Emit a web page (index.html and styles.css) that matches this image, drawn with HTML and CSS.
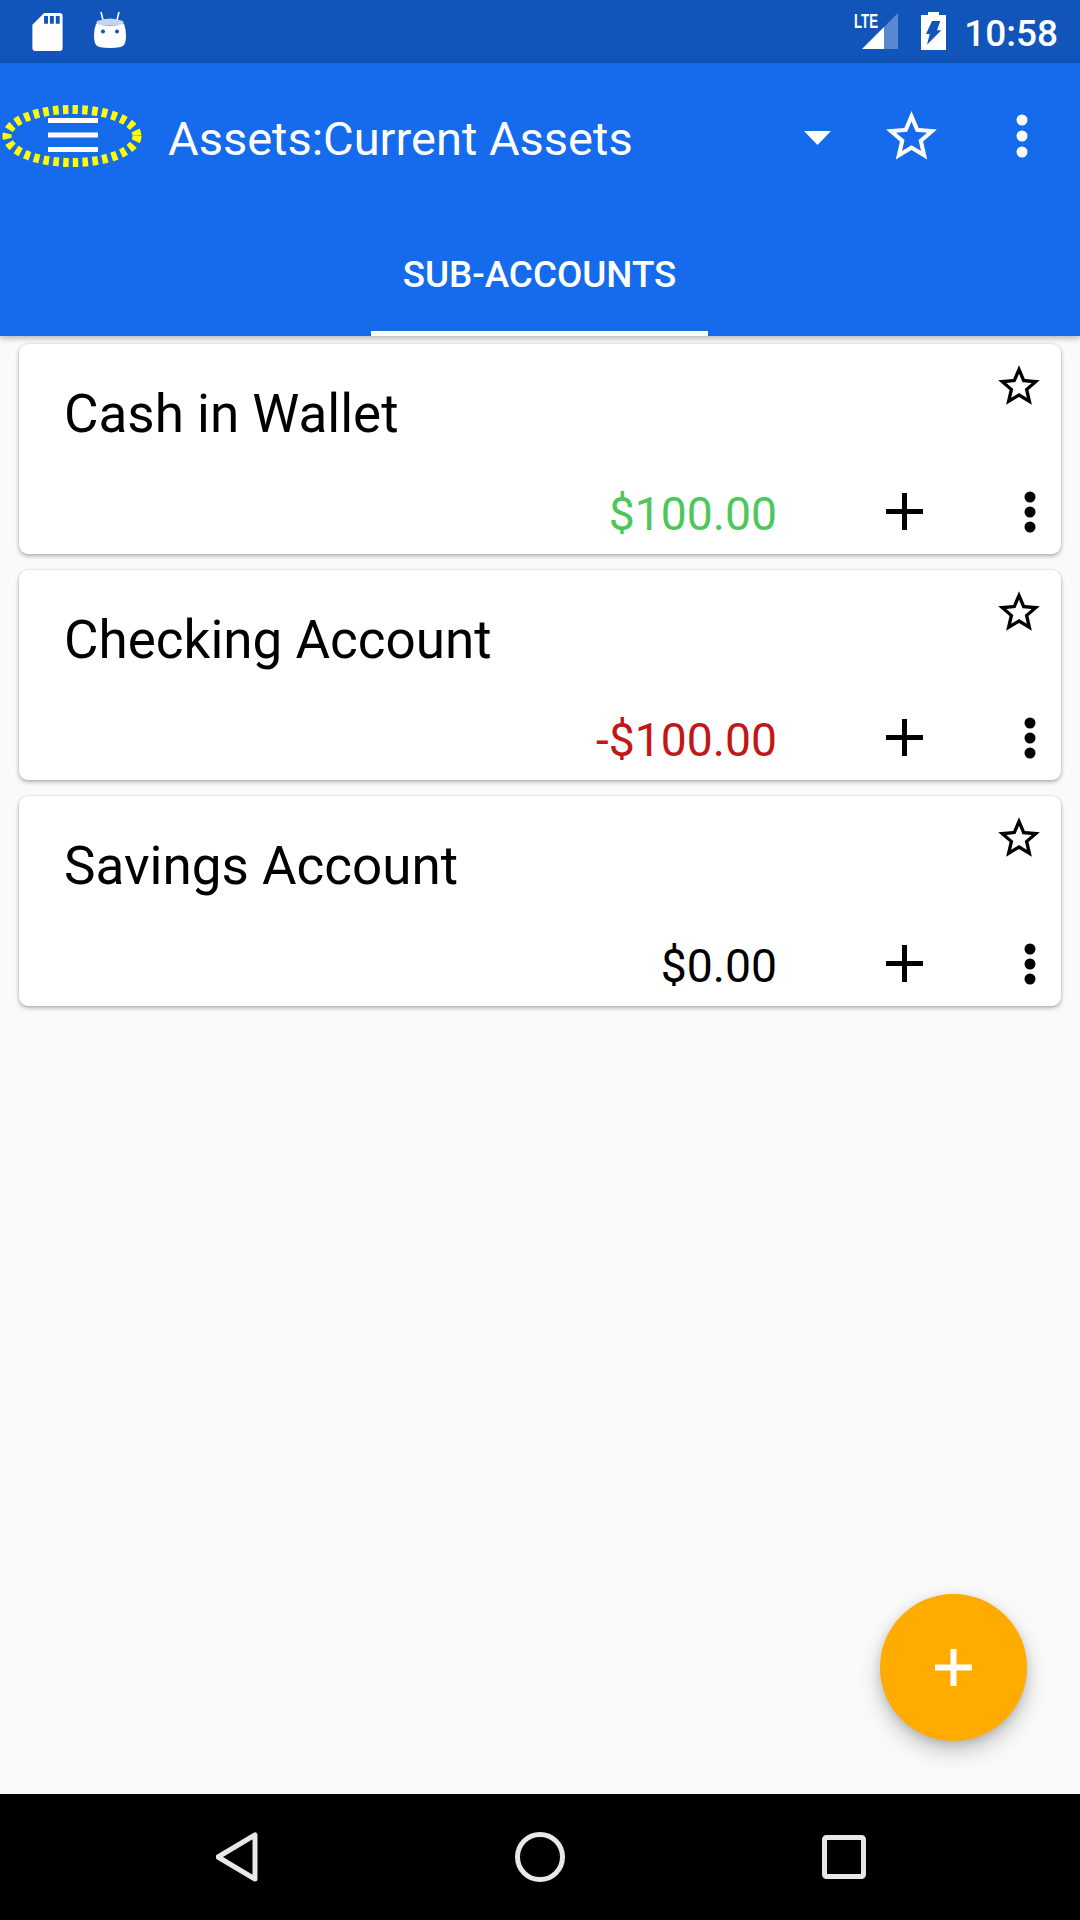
FILE: index.html
```html
<!doctype html>
<html lang="en">
 <head>
  <meta charset="UTF-8">
  <title>Assets:Current Assets</title>
  <link rel="stylesheet" href="styles.css">
 </head>
 <body>
  <div class="app">
   <div class="status">
    <div class="status-left">
     <svg class="ic-sd" viewBox="0 0 31 39"><path fill="#fff" d="M12 0h16q3 0 3 3v33q0 3-3 3H3q-3 0-3-3V12zM12 3v8h4V3zM18 3v8h4V3zM24 3v8h4V3z" fill-rule="evenodd"/></svg>
     <svg class="ic-droid" viewBox="0 0 32 38"><path d="M7 1l2 8M25 1l-2 8" stroke="#fff" stroke-width="1.6" fill="none"/><path fill="#c6d5ee" d="M3 10q13-5 26 0l1 4H2z"/><path fill="#fff" fill-rule="evenodd" d="M2 13q14 3 28 0 2 5 2 11 0 7-2 10-2 3-14 3T2 34q-2-3-2-10 0-6 2-11zM9 18.500a2 2 0 1 0 .01 0zM23 18.500a2 2 0 1 0 .01 0z"/></svg>
    </div>
    <div class="status-right">
     <svg class="ic-signal" viewBox="0 -6 46 44"><text x="1" y="16" class="lte" textLength="24" lengthAdjust="spacingAndGlyphs">LTE</text><path fill="#fff" d="M9 37L31 15v22z"/><path fill="#fff" opacity=".3" d="M31 15L45 1v36H31z"/></svg>
     <svg class="ic-batt" viewBox="0 0 25 38"><path fill="#fff" fill-rule="evenodd" d="M7 0h11v3h7v35H0V3h7zM11 9h8.300L16 18.300h4.300L6 32.700 8.700 22H5z"/></svg>
     <span class="clock">10:58</span>
    </div>
   </div>

   <div class="toolbar">
    <div class="toolbar-row">
     <div class="menu">
      <svg class="menu-lines" viewBox="0 0 50 34"><path fill="#fff" d="M0 0h50v5H0zM0 14.500h50v5H0zM0 29h50v5H0z"/></svg>
      <svg class="menu-ring" viewBox="0 0 144 68"><ellipse cx="72" cy="35" rx="65" ry="26.500" fill="none" stroke="#ffff00" stroke-width="9" stroke-dasharray="5.500 4.300"/></svg>
     </div>
     <div class="toolbar-title">Assets:Current Assets</div>
     <svg class="ic-drop" viewBox="0 0 27 14"><path fill="#fff" d="M0 0h27L13.500 14z"/></svg>
     <svg class="ic-star-top" viewBox="0 0 24 24"><path fill="#fff" d="M22 9.240l-7.190-.62L12 2 9.190 8.630 2 9.240l5.460 4.730L5.820 21 12 17.270 18.180 21l-1.630-7.030L22 9.240zM12 15.400l-3.760 2.270 1-4.280-3.320-2.880 4.380-.38L12 6.100l1.710 4.040 4.380.38-3.320 2.880 1 4.280L12 15.400z"/></svg>
     <svg class="ic-dots-top" viewBox="0 0 12 44"><circle cx="6" cy="6" r="5.500" fill="#fff"/><circle cx="6" cy="22" r="5.500" fill="#fff"/><circle cx="6" cy="38" r="5.500" fill="#fff"/></svg>
    </div>
    <div class="tabs"><div class="tab">SUB-ACCOUNTS</div></div>
   </div>

   <div class="content">
    <div class="card">
     <div class="card-top">
      <div class="card-title">Cash in Wallet</div>
      <svg class="ic-star" viewBox="0 0 24 24"><path d="M22 9.240l-7.190-.62L12 2 9.190 8.630 2 9.240l5.460 4.730L5.820 21 12 17.270 18.180 21l-1.630-7.030L22 9.240zM12 15.400l-3.760 2.270 1-4.280-3.320-2.880 4.380-.38L12 6.100l1.710 4.040 4.380.38-3.320 2.880 1 4.280L12 15.400z"/></svg>
     </div>
     <div class="card-bottom">
      <div class="amount green">$100.00</div>
      <svg class="ic-plus" viewBox="0 0 37 37"><path d="M16 0h5v16h16v5H21v16h-5V21H0v-5h16z"/></svg>
      <svg class="ic-dots" viewBox="0 0 12 42"><circle cx="6" cy="6" r="5.500"/><circle cx="6" cy="21" r="5.500"/><circle cx="6" cy="36" r="5.500"/></svg>
     </div>
    </div>
    <div class="card">
     <div class="card-top">
      <div class="card-title">Checking Account</div>
      <svg class="ic-star" viewBox="0 0 24 24"><path d="M22 9.240l-7.190-.62L12 2 9.190 8.630 2 9.240l5.460 4.730L5.820 21 12 17.270 18.180 21l-1.630-7.030L22 9.240zM12 15.400l-3.760 2.270 1-4.280-3.320-2.880 4.380-.38L12 6.100l1.710 4.040 4.380.38-3.320 2.880 1 4.280L12 15.400z"/></svg>
     </div>
     <div class="card-bottom">
      <div class="amount red">-$100.00</div>
      <svg class="ic-plus" viewBox="0 0 37 37"><path d="M16 0h5v16h16v5H21v16h-5V21H0v-5h16z"/></svg>
      <svg class="ic-dots" viewBox="0 0 12 42"><circle cx="6" cy="6" r="5.500"/><circle cx="6" cy="21" r="5.500"/><circle cx="6" cy="36" r="5.500"/></svg>
     </div>
    </div>
    <div class="card">
     <div class="card-top">
      <div class="card-title">Savings Account</div>
      <svg class="ic-star" viewBox="0 0 24 24"><path d="M22 9.240l-7.190-.62L12 2 9.190 8.630 2 9.240l5.460 4.730L5.820 21 12 17.270 18.180 21l-1.630-7.030L22 9.240zM12 15.400l-3.760 2.270 1-4.280-3.320-2.880 4.380-.38L12 6.100l1.710 4.040 4.380.38-3.320 2.880 1 4.280L12 15.400z"/></svg>
     </div>
     <div class="card-bottom">
      <div class="amount">$0.00</div>
      <svg class="ic-plus" viewBox="0 0 37 37"><path d="M16 0h5v16h16v5H21v16h-5V21H0v-5h16z"/></svg>
      <svg class="ic-dots" viewBox="0 0 12 42"><circle cx="6" cy="6" r="5.500"/><circle cx="6" cy="21" r="5.500"/><circle cx="6" cy="36" r="5.500"/></svg>
     </div>
    </div>
    <div class="fab">
     <svg class="ic-fab" viewBox="0 0 37 37"><path fill="#fff" d="M15.500 0h6v15.500H37v6H21.500V37h-6V21.500H0v-6h15.500z"/></svg>
    </div>
   </div>

   <div class="navbar">
    <svg class="ic-back" viewBox="0 0 42 50"><path d="M39 3v44L2 25z" fill="none" stroke="#e8e8e8" stroke-width="5" stroke-linejoin="round"/></svg>
    <svg class="ic-home" viewBox="0 0 50 50"><circle cx="25" cy="25" r="22.500" fill="none" stroke="#e8e8e8" stroke-width="5"/></svg>
    <svg class="ic-recent" viewBox="0 0 44 44"><rect x="2.500" y="2.500" width="39" height="39" rx="2" fill="none" stroke="#e8e8e8" stroke-width="5"/></svg>
   </div>
  </div>
 </body>
</html>
```

FILE: styles.css
```css
* {
	margin: 0;
	padding: 0;
	box-sizing: border-box;
}

body {
	width: 1080px;
	height: 1920px;
	overflow: hidden;
	background: #fafafa;
	font-family: Roboto, "Noto Sans", sans-serif;
}

svg {
	display: block;
	flex: none;
}

.app {
	display: flex;
	flex-direction: column;
	height: 1920px;
}

/* status bar */
.status {
	height: 63px;
	background: #1155bb;
	display: flex;
	justify-content: space-between;
	align-items: flex-start;
	color: #fff;
}

.status-left {
	display: flex;
	padding: 13px 0 0 32px;
}

.ic-sd {
	width: 31px;
	height: 38px;
}

.ic-droid {
	width: 32px;
	height: 38px;
	margin: -2px 0 0 31px;
}

.status-right {
	display: flex;
	padding: 12px 22px 0 0;
}

.ic-signal {
	width: 46px;
	height: 44px;
	margin-top: -6px;
}

.lte {
	font-family: "Liberation Sans", sans-serif;
	font-weight: 700;
	font-size: 20px;
	fill: #fff;
}

.ic-batt {
	width: 25px;
	height: 38px;
	margin-left: 22px;
}

.clock {
	font-size: 37px;
	font-weight: 500;
	line-height: 44px;
	margin-left: 18px;
}

/* toolbar */
.toolbar {
	height: 273px;
	background: #166bec;
	box-shadow: 0 2px 6px rgba(0, 0, 0, .3);
	position: relative;
	z-index: 1;
}

.toolbar-row {
	height: 144px;
	display: flex;
	align-items: center;
	color: #fff;
}

.menu {
	width: 168px;
	height: 144px;
	padding: 55px 0 0 48px;
	position: relative;
}

.menu-lines {
	width: 50px;
	height: 34px;
}

.menu-ring {
	position: absolute;
	left: 0;
	top: 38px;
	width: 144px;
	height: 68px;
}

.toolbar-title {
	font-size: 47px;
	flex: 1;
	white-space: nowrap;
	padding-top: 6px;
}

.ic-drop {
	width: 27px;
	height: 14px;
	margin: 6px 50px 0 0;
}

.ic-star-top {
	width: 61px;
	height: 61px;
	margin-top: 2px;
}

.ic-dots-top {
	width: 12px;
	height: 44px;
	margin: 2px 52px 0 74px;
}

.tabs {
	height: 129px;
	display: flex;
	justify-content: center;
}

.tab {
	width: 337px;
	height: 129px;
	margin-right: 1px;
	border-bottom: 5px solid #fff;
	color: #fff;
	font-size: 36.800px;
	font-weight: 500;
	text-align: center;
	padding-top: 48px;
	line-height: 40px;
	white-space: nowrap;
}

/* account cards */
.content {
	flex: 1;
	padding: 8px 19px 0;
	display: flex;
	flex-direction: column;
	gap: 16px;
	position: relative;
}

.card {
	height: 210px;
	background: #fff;
	border-radius: 9px;
	box-shadow: 0 2px 4px rgba(0, 0, 0, .3), 0 0 2px rgba(0, 0, 0, .12);
	display: flex;
	flex-direction: column;
	justify-content: space-between;
}

.card-top {
	display: flex;
	justify-content: space-between;
	padding: 17px 17px 0 45px;
}

.card-title {
	font-size: 53px;
	line-height: 60px;
	padding-top: 23px;
	color: #000;
}

.ic-star {
	width: 50px;
	height: 50px;
}

.card-bottom {
	display: flex;
	align-items: center;
	justify-content: flex-end;
	padding: 0 25px 13px 0;
}

.amount {
	font-size: 46.300px;
	line-height: 54px;
	color: #000;
}

.green {
	color: #4cc75a;
}

.red {
	color: #c31616;
}

.ic-plus {
	width: 37px;
	height: 37px;
	margin: 0 0 5px 109px;
}

.ic-dots {
	width: 12px;
	height: 42px;
	margin: 0 0 5px 101px;
}

.fab {
	position: absolute;
	right: 53px;
	bottom: 53px;
	width: 147px;
	height: 147px;
	border-radius: 50%;
	background: #ffab00;
	box-shadow: 0 10px 22px rgba(0, 0, 0, .22), 0 3px 8px rgba(0, 0, 0, .12);
	display: flex;
	align-items: center;
	justify-content: center;
}

.ic-fab {
	width: 37px;
	height: 37px;
}

/* bottom navigation */
.navbar {
	height: 126px;
	background: #000;
	display: flex;
	align-items: center;
	padding: 0 214px 0 216px;
	justify-content: space-between;
}

.ic-back {
	width: 42px;
	height: 50px;
}

.ic-home {
	width: 50px;
	height: 50px;
}

.ic-recent {
	width: 44px;
	height: 44px;
}
```
